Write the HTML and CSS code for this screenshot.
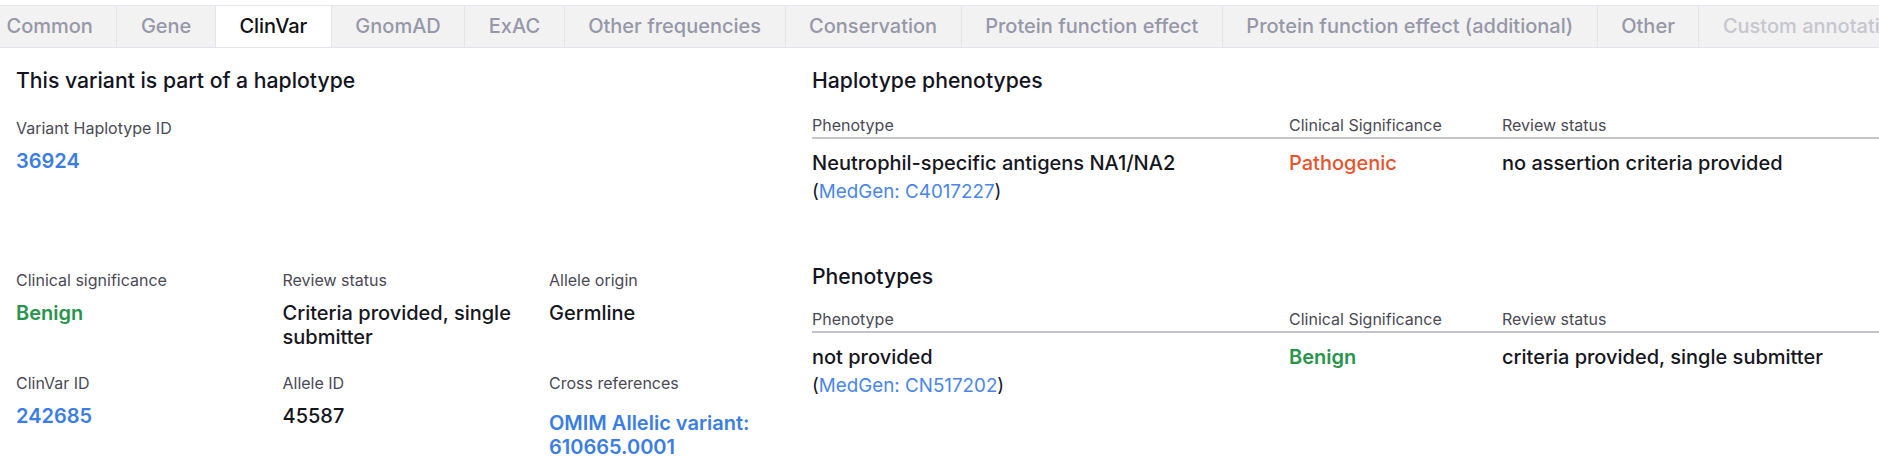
FILE: index.html
```html
<!DOCTYPE html>
<html>
<head>
<meta charset="utf-8">
<link rel="stylesheet" href="styles.css">
</head>
<body>
<nav class="tabbar">
  <ul class="tablist">
    <li class="tab">Common</li>
    <li class="tab">Gene</li>
    <li class="tab active">ClinVar</li>
    <li class="tab">GnomAD</li>
    <li class="tab">ExAC</li>
    <li class="tab">Other frequencies</li>
    <li class="tab">Conservation</li>
    <li class="tab">Protein function effect</li>
    <li class="tab">Protein function effect (additional)</li>
    <li class="tab">Other</li>
    <li class="tab disabled">Custom annotations</li>
  </ul>
</nav>
<main class="main">
  <section class="left-a">
    <h2 class="heading">This variant is part of a haplotype</h2>
    <div class="field">
      <div class="label">Variant Haplotype ID</div>
      <div class="value"><a class="link">36924</a></div>
    </div>
  </section>
  <section class="right-a">
    <h2 class="heading">Haplotype phenotypes</h2>
    <div class="table">
      <div class="row head">
        <div class="cell">Phenotype</div>
        <div class="cell">Clinical Significance</div>
        <div class="cell">Review status</div>
      </div>
      <div class="row body">
        <div class="cell">
          <div class="value">Neutrophil-specific antigens NA1/NA2</div>
          <div class="ref">(<a class="reflink">MedGen: C4017227</a>)</div>
        </div>
        <div class="cell"><div class="value pathogenic">Pathogenic</div></div>
        <div class="cell"><div class="value">no assertion criteria provided</div></div>
      </div>
    </div>
  </section>
  <section class="left-b">
    <div class="grid">
      <div class="field">
        <div class="label">Clinical significance</div>
        <div class="value benign">Benign</div>
      </div>
      <div class="field">
        <div class="label">Review status</div>
        <div class="value">Criteria provided, single submitter</div>
      </div>
      <div class="field">
        <div class="label">Allele origin</div>
        <div class="value">Germline</div>
      </div>
      <div class="field">
        <div class="label">ClinVar ID</div>
        <div class="value"><a class="link">242685</a></div>
      </div>
      <div class="field">
        <div class="label">Allele ID</div>
        <div class="value">45587</div>
      </div>
      <div class="field">
        <div class="label">Cross references</div>
        <div class="value xref"><a class="link">OMIM Allelic variant: 610665.0001</a></div>
      </div>
    </div>
  </section>
  <section class="right-b">
    <h2 class="heading">Phenotypes</h2>
    <div class="table">
      <div class="row head">
        <div class="cell">Phenotype</div>
        <div class="cell">Clinical Significance</div>
        <div class="cell">Review status</div>
      </div>
      <div class="row body">
        <div class="cell">
          <div class="value">not provided</div>
          <div class="ref">(<a class="reflink">MedGen: CN517202</a>)</div>
        </div>
        <div class="cell"><div class="value benign">Benign</div></div>
        <div class="cell"><div class="value">criteria provided, single submitter</div></div>
      </div>
    </div>
  </section>
</main>
</body>
</html>
```
FILE: styles.css
```css
* { box-sizing: border-box; }
html, body { margin: 0; padding: 0; }
body {
  font-family: Inter, "Noto Sans", sans-serif;
  color: #15151f;
  background: #fff;
  overflow: hidden;
  width: 1879px;
}
.tabbar {
  margin-top: 5px;
  border-top: 1px solid #e6e6ee;
  border-bottom: 1px solid #e3e3eb;
  background: #f2f2f2;
  overflow: hidden;
  height: 43px;
}
.tablist {
  list-style: none;
  margin: 0 0 0 -17px;
  padding: 0;
  display: flex;
  white-space: nowrap;
}
.tab {
  flex: none;
  height: 41px;
  line-height: 41px;
  padding: 0 23.5px;
  font-size: 20px;
  font-weight: 500;
  color: #9697a8;
  border-right: 1px solid #e4e4ea;
}
.tab.active { background: #fff; color: #111; }
.tab.disabled { color: #c6c6d0; }

.main {
  display: grid;
  grid-template-columns: 796px 1fr;
  row-gap: 59px;
  padding-top: 19px;
}
.left-a, .left-b { padding-left: 16px; }
.right-a, .right-b { padding-left: 16px; }
.left-b { padding-top: 7px; }
.heading {
  margin: 0;
  font-size: 21.2px;
  line-height: 26px;
  font-weight: 500;
  color: #14141f;
}
.left-a .heading { margin-bottom: 25px; }
.label {
  font-size: 16px;
  line-height: 20px;
  color: #4a4a55;
}
.field .label { margin-bottom: 11px; }
.value {
  font-size: 20px;
  line-height: 24px;
  font-weight: 500;
  color: #16161d;
}
.link { color: #3b7de3; font-weight: 600; text-decoration: none; }
.benign { color: #2a944d; font-weight: 600; }
.pathogenic { color: #e8532d; }
.grid {
  display: grid;
  grid-template-columns: 250px 250px 250px;
  column-gap: 16.5px;
  row-gap: 24px;
}
.xref { padding-top: 7px; }

.table { margin-top: 22px; }
.right-b .table { margin-top: 20px; }
.row {
  display: grid;
  grid-template-columns: 477px 213px 1fr;
}
.row.head {
  font-size: 16px;
  line-height: 20px;
  color: #4a4a55;
  padding-bottom: 2px;
  border-bottom: 2px solid #c3c3d0;
}
.row.body { padding-top: 12px; }
.ref {
  margin-top: 5px;
  font-size: 18.8px;
  line-height: 24px;
  color: #15151f;
}
.reflink { color: #4a86e8; }
```
